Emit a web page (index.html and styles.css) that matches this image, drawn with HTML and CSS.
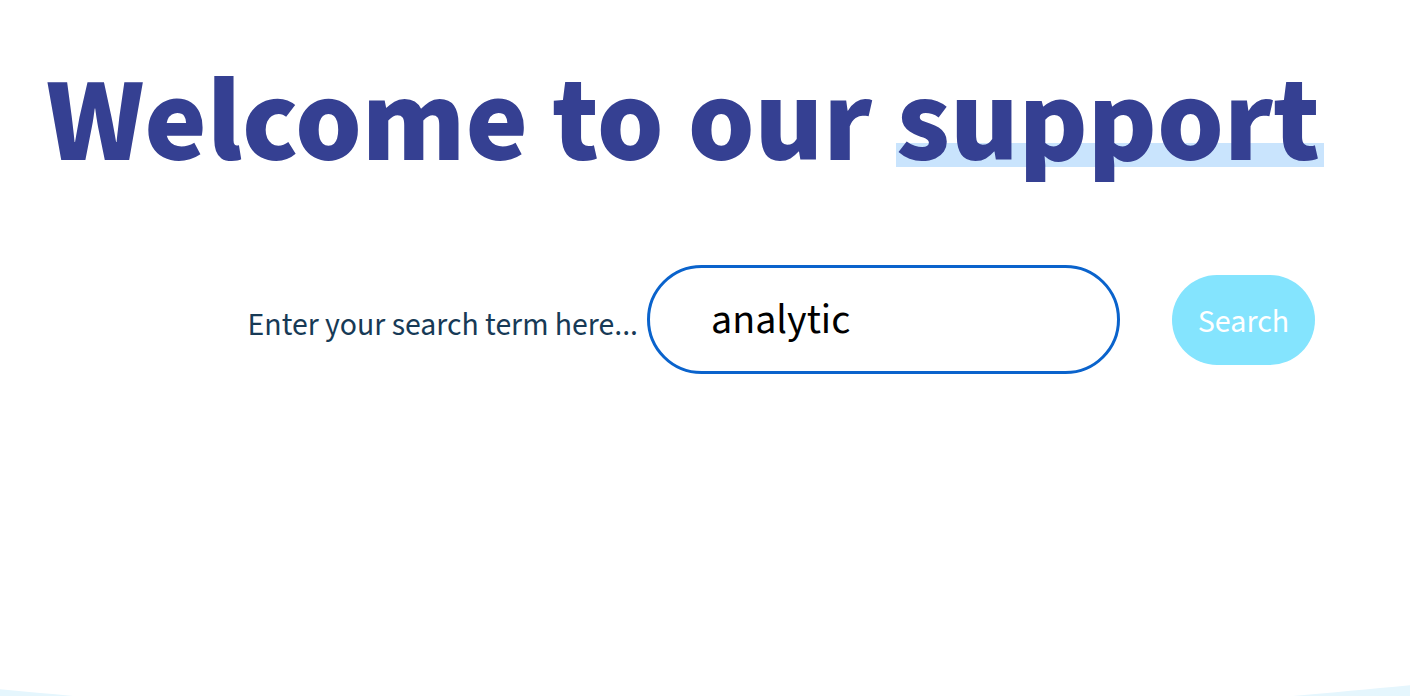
FILE: index.html
```html
<!DOCTYPE html>
<html lang="en">
<head>
<meta charset="utf-8">
<title>Support</title>
<link rel="stylesheet" href="styles.css">
</head>
<body>
<div class="page">
  <h1 class="title">Welcome to our <span class="mark">support</span></h1>
  <form class="search" onsubmit="return false">
    <label class="search-label" for="q">Enter your search term here...</label>
    <input class="search-input" id="q" type="text" value="analytic">
    <button class="search-btn" type="submit">Search</button>
  </form>
  <div class="wave">
    <svg viewBox="0 0 1410 11" preserveAspectRatio="none" width="1410" height="11">
      <path d="M0 4.3 C 25 6.5 50 9 73 11 L 0 11 Z" fill="#e5f6fd"/>
      <path d="M1293 11 C 1330 8 1370 4 1410 0.3 L 1410 11 Z" fill="#e5f6fd"/>
    </svg>
  </div>
</div>
</body>
</html>
```
FILE: styles.css
```css
* { box-sizing: border-box; }
html, body { margin: 0; padding: 0; background: #ffffff; }
body { font-family: "Source Sans Pro", "Source Sans 3", Lato, "Noto Sans", sans-serif; }

.page {
  min-height: 100vh;
  display: flex;
  flex-direction: column;
}

.title {
  margin: 63px 0 0 46px;
  font-size: 120px;
  line-height: 1;
  font-weight: 800;
  color: #354092;
  white-space: nowrap;
}

.mark {
  background-image: linear-gradient(#c9e4fd, #c9e4fd);
  background-repeat: no-repeat;
  background-size: 100% 24px;
  background-position: 0 calc(100% - 41px);
  padding: 0 4px 0 0;
  margin: 0 -4px 0 0;
}

.search {
  margin: 82px 95px 0 0;
  display: flex;
  align-items: center;
  justify-content: flex-end;
}

.search-label {
  font-size: 31.75px;
  color: #173a56;
  margin-right: 9px;
  padding-top: 10px;
}

.search-input {
  width: 473px;
  height: 109px;
  border: 3px solid #0a63cc;
  border-radius: 55px;
  padding: 0 0 0 61px;
  font-family: inherit;
  font-size: 42px;
  color: #000000;
  outline: none;
  background: #ffffff;
}

.search-btn {
  margin-left: 52px;
  width: 143px;
  height: 90px;
  border: none;
  border-radius: 45px;
  background: #84e4fe;
  color: #ffffff;
  font-family: inherit;
  font-size: 32px;
  padding: 4px 0 0;
  cursor: pointer;
}

.wave {
  margin-top: auto;
  height: 11px;
  line-height: 0;
}

.wave svg { display: block; width: 100%; height: 11px; }
```
